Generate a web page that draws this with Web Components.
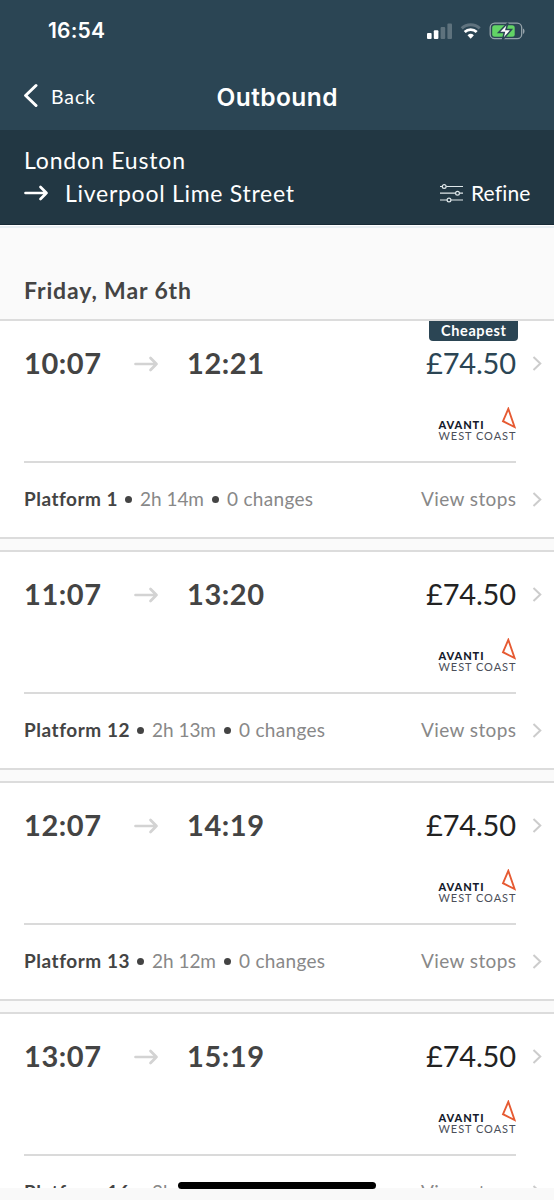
<!DOCTYPE html>
<html lang="en">
<head>
<meta charset="utf-8">
<title>Outbound</title>
<style>
html,body{margin:0;height:100%;overflow:hidden;background:#fafafa}
body{font-family:Lato,"Liberation Sans",sans-serif;color:#444}
</style>
</head>
<body>
<outbound-screen></outbound-screen>
<script>
const define = (name, html, setup) => customElements.define(name, class extends HTMLElement {
  connectedCallback() {
    if (this.shadowRoot) return;
    const t = document.createElement('template');
    t.innerHTML = typeof html === 'function' ? html(this) : html;
    this.attachShadow({mode: 'open'}).append(t.content.cloneNode(true));
    if (setup) setup(this);
  }
});

/* A single line of text, tracked so that it fills the width it is given. */
define('fit-text', `<style>:host{display:block;flex:none;white-space:nowrap}span{display:inline-block}</style><span><slot></slot></span>`, el => {
  const w = +el.getAttribute('w');
  el.style.width = w + 'px';
  const span = el.shadowRoot.querySelector('span');
  const n = el.textContent.length;
  span.style.letterSpacing = '0px';
  const natural = span.getBoundingClientRect().width;
  span.style.letterSpacing = ((w - natural) / (n - 1)).toFixed(3) + 'px';
});

define('icon-chevron', `<style>:host{display:block;width:12px;height:18px}svg{display:block}</style>
<svg width="12" height="18" viewBox="0 0 12 18" fill="none" stroke="#ccc" stroke-width="2"><path d="M2.500 3 9.300 9.500 2.500 16"/></svg>`);

define('icon-arrow', `<style>:host{display:block;width:26px;height:18px}svg{display:block}</style>
<svg width="26" height="18" viewBox="0 0 26 18" fill="none" stroke="currentColor" stroke-width="2.700" stroke-linecap="round" stroke-linejoin="round"><path d="M1.500 9H22.500M16.500 3 22.500 9l-6 6"/></svg>`);

define('status-bar', `<style>
:host{display:flex;justify-content:space-between;height:61px;padding:0 29px 0 48px;color:#fff;box-sizing:border-box;align-items:center}
fit-text{font:600 21px/24px Inter,sans-serif}
.icons{display:flex;align-items:center}
svg{display:block}
</style>
<fit-text w="57">16:54</fit-text>
<div class="icons"><svg width="98" height="20" viewBox="0 0 98 20">
<g fill="#fff"><rect x="0" y="12" width="4.600" height="6" rx="1"/><rect x="6.800" y="9.300" width="4.600" height="8.700" rx="1"/><g opacity=".24"><rect x="13.600" y="6" width="4.600" height="12" rx="1"/><rect x="20.400" y="2.500" width="4.600" height="15.500" rx="1"/></g></g>
<g fill="none" stroke="#fff"><path d="M34.700 7.300a13 13 0 0 1 18 0" stroke-width="3" opacity=".25"/><path d="M37.700 11a8.600 8.600 0 0 1 12 0" stroke-width="2.800"/></g>
<path d="M40.500 14.300a4.800 4.800 0 0 1 6.400 0L43.700 17.800z" fill="#fff"/>
<rect x="63.200" y="2.200" width="31.500" height="15.500" rx="4.500" fill="none" stroke="#fff" stroke-opacity=".5" stroke-width="1.300"/>
<path d="M96 7.500c2 .7 2 4.700 0 5.400z" fill="#fff" opacity=".5"/>
<rect x="65.200" y="4.200" width="22.500" height="11.600" rx="2.500" fill="#62d465"/>
<path d="M81 1.700 71.600 11.500h5.700L75.400 19 84.500 8.600h-5.500z" fill="#fff" stroke="#2b4554" stroke-width="1.500"/>
</svg></div>`);

define('nav-bar', `<style>
:host{display:grid;grid-template-columns:1fr auto 1fr;height:69px;padding:0 24px;color:#fff;box-sizing:border-box}
.back{display:flex;align-items:flex-start;gap:13px;padding-top:22px}
.back fit-text{font-size:19.500px;line-height:28px}
.back svg{display:block}
.title{font:600 24.500px/28px Inter,sans-serif;padding-top:22px}
</style>
<div class="back"><svg width="14" height="26" viewBox="0 0 14 26" fill="none" stroke="#fff" stroke-width="3" stroke-linecap="round" stroke-linejoin="round"><path d="M12 2.500 1.600 12.500 12 22.500"/></svg><fit-text w="44">Back</fit-text></div>
<fit-text class="title" w="121">Outbound</fit-text>`);

define('route-bar', `<style>
:host{display:flex;justify-content:space-between;align-items:flex-end;height:95px;padding:0 24px 15px;background:#223743;border-bottom:1px solid #172a36;box-sizing:border-box;color:#fff}
.route{font-size:23px;line-height:32px}
.to{display:flex;align-items:center;gap:15px;height:33px}
.refine{display:flex;align-items:center;gap:8px;font-size:21px;line-height:32px}
svg{display:block}
</style>
<div class="route"><fit-text w="161">London Euston</fit-text>
<div class="to"><icon-arrow></icon-arrow><fit-text w="229">Liverpool Lime Street</fit-text></div></div>
<div class="refine"><svg width="23" height="20" viewBox="0 0 23 20" fill="none" stroke="#dfe7ea" stroke-width="1.200"><path d="M0 3.500h2M6.200 3.500H23M0 10.200h15.500M19.500 10.200H23M0 17h7M11 17H23"/><circle cx="4.200" cy="3.500" r="1.900"/><circle cx="17.500" cy="10.200" r="1.900"/><circle cx="9" cy="17" r="1.900"/></svg><fit-text w="59">Refine</fit-text></div>`);

define('date-heading', el => `<style>
:host{display:flex;align-items:flex-end;height:94px;padding:0 24px 14px;box-sizing:border-box;font-size:23px;font-weight:700;line-height:30px;background:linear-gradient(#fff 0 1px,#e8eef2 1px 3px,#fafafa 3px)}
</style><fit-text w="167">${el.getAttribute('label')}</fit-text>`);

define('avanti-logo', `<style>
:host{display:grid;grid-template:23px 12px/77px;width:77px;height:35px}
.top{display:flex;justify-content:space-between;align-items:flex-end}
.a{font-size:11px;font-weight:900;line-height:12px;color:#151b2b;position:relative;top:1px}
.b{font-size:11px;font-weight:400;line-height:12px;color:#4b4f59}
svg{display:block;align-self:flex-start}
</style><div class="top"><fit-text class="a" w="45">AVANTI</fit-text>
<svg width="15" height="23" viewBox="0 0 15 23" fill="none" stroke="#e65a32" stroke-width="1.900"><path d="M7.300 1.800 2 14.200 13.600 20z"/></svg></div>
<fit-text class="b" w="77">WEST COAST</fit-text>`);

define('journey-card', el => {
  const a = k => el.getAttribute(k);
  const wide = a('platform').length > 1;
  return `<style>
:host{display:block;position:relative;box-sizing:border-box;height:220px;padding:26px 11px 0 24px;background:#fff;border:solid #dcdcdc;border-width:2px 0}
.times,.foot{display:grid;grid-template-columns:1fr auto 27px;align-items:center}
.times{height:32px;font-size:29px;line-height:32px}
.left{display:flex;align-items:center}
.left fit-text{font-weight:700}
icon-arrow{color:#d3d3d3;margin:2px 27px 0 33px}
.times icon-chevron,.foot icon-chevron{justify-self:end}
.price{color:${a('badge') ? '#2b4554' : '#222'};font-weight:400}
.brand{display:flex;justify-content:flex-end;margin:28px 27.500px 0 0}
.rule{height:2px;background:#dadada;margin:19px 27px 0 0}
.foot{height:32px;margin-top:20px;font-size:19px;line-height:32px;color:#888}
.foot b{font-weight:700;color:#444}
.dot{width:7px;height:7px;border-radius:50%;background:#444;margin:0 8px}
.badge{position:absolute;top:0;right:36px;height:20px;width:89px;display:flex;justify-content:center;background:#2b4554;border-radius:0 0 4px 4px;color:#fff;font-size:14.500px;font-weight:700;line-height:19px}
</style>
${a('badge') ? `<div class="badge"><fit-text w="65">${a('badge')}</fit-text></div>` : ''}
<div class="times"><div class="left"><fit-text w="77">${a('depart')}</fit-text><icon-arrow></icon-arrow><fit-text w="77">${a('arrive')}</fit-text></div><fit-text class="price" w="90">${a('price')}</fit-text><icon-chevron></icon-chevron></div>
<div class="brand"><avanti-logo></avanti-logo></div>
<div class="rule"></div>
<div class="foot"><div class="left"><b><fit-text w="${wide ? 105 : 93}">Platform ${a('platform')}</fit-text></b><i class="dot"></i><fit-text style="font-weight:400" w="64">${a('duration')}</fit-text><i class="dot"></i><fit-text style="font-weight:400" w="86">0 changes</fit-text></div><fit-text w="95">View stops</fit-text><icon-chevron></icon-chevron></div>`;
});

define('home-indicator', `<style>
:host{display:block;position:absolute;left:0;right:0;bottom:0;height:12px;background:#f9f9f9}
i{position:absolute;left:178px;top:-6px;width:198px;height:7px;border-radius:4px;background:#000}
</style><i></i>`);

define('outbound-screen', `<style>
:host{display:block;position:relative;width:554px;height:1200px;overflow:hidden;background:#fafafa}
header{background:#2b4554}
main{display:flex;flex-direction:column;gap:11px}
</style>
<header><status-bar></status-bar><nav-bar></nav-bar></header>
<route-bar></route-bar>
<date-heading label="Friday, Mar 6th"></date-heading>
<main>
<journey-card depart="10:07" arrive="12:21" price="£74.50" platform="1" duration="2h 14m" badge="Cheapest"></journey-card>
<journey-card depart="11:07" arrive="13:20" price="£74.50" platform="12" duration="2h 13m"></journey-card>
<journey-card depart="12:07" arrive="14:19" price="£74.50" platform="13" duration="2h 12m"></journey-card>
<journey-card depart="13:07" arrive="15:19" price="£74.50" platform="16" duration="2h 12m"></journey-card>
</main>
<home-indicator></home-indicator>`);
</script>
</body>
</html>
